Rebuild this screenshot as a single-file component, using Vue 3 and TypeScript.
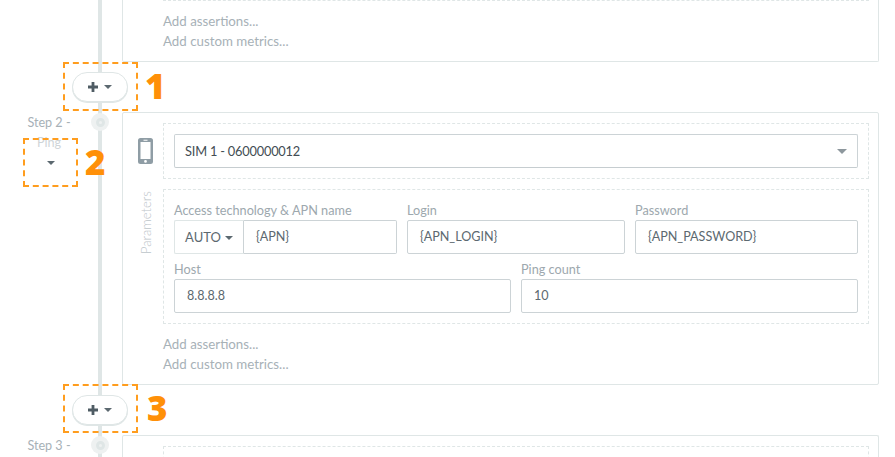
<script setup lang="ts">
interface Mark {
  id: number;
  kind: string;
}

const marks: Mark[] = [
  { id: 1, kind: "mark--one" },
  { id: 2, kind: "mark--two" },
  { id: 3, kind: "mark--three" },
];

const addLinks = ["Add assertions...", "Add custom metrics..."];
</script>

<template>
  <div class="scenario">
    <div class="rail"></div>

    <div class="step step--first">
      <div class="step__side"></div>
      <div class="card card--cut">
        <div class="dashed dashed--stub"></div>
        <div class="links">
          <a v-for="link in addLinks" :key="link">{{ link }}</a>
        </div>
      </div>
    </div>

    <div class="add-row">
      <button class="add-btn">
        <svg width="10" height="10" viewBox="0 0 10 10">
          <path fill="#4f5c64" d="M3.6 0h2.8v3.6H10v2.8H6.4V10H3.6V6.4H0V3.6h3.6z" />
        </svg>
        <span class="caret"></span>
      </button>
    </div>

    <div class="step">
      <div class="step__side">
        <div class="step__label">
          <span>Step 2 -</span>
          <span class="step__name">Ping</span>
          <span class="caret caret--label"></span>
        </div>
        <div class="step__dot"><span></span></div>
      </div>
      <div class="card">
        <div class="card__row">
          <div class="card__aside">
            <svg class="phone" width="15" height="26" viewBox="0 0 15 26">
              <path
                fill="#8f9da5"
                fill-rule="evenodd"
                d="M2.5 0h10A2.5 2.5 0 0 1 15 2.5v21a2.5 2.5 0 0 1-2.5 2.5h-10A2.5 2.5 0 0 1 0 23.5v-21A2.5 2.5 0 0 1 2.5 0zM2.5 4v17h10V4zM5.5 1.8v.9h4v-.9zM7.5 22a1.4 1.4 0 1 0 0 2.8 1.4 1.4 0 0 0 0-2.8z"
              />
            </svg>
          </div>
          <div class="dashed dashed--sim">
            <div class="select">
              <span>SIM 1 - 0600000012</span>
              <span class="select__arrow"></span>
            </div>
          </div>
        </div>

        <div class="card__row card__row--params">
          <div class="card__aside card__aside--text">
            <span class="vertical">Parameters</span>
          </div>
          <div class="dashed dashed--params">
            <div class="fields fields--three">
              <div class="field">
                <label>Access technology &amp; APN name</label>
                <div class="group">
                  <button class="group__btn">
                    AUTO
                    <span class="caret caret--dark"></span>
                  </button>
                  <div class="input input--joined">{APN}</div>
                </div>
              </div>
              <div class="field">
                <label>Login</label>
                <div class="input">{APN_LOGIN}</div>
              </div>
              <div class="field">
                <label>Password</label>
                <div class="input">{APN_PASSWORD}</div>
              </div>
            </div>
            <div class="fields fields--two">
              <div class="field">
                <label>Host</label>
                <div class="input">8.8.8.8</div>
              </div>
              <div class="field">
                <label>Ping count</label>
                <div class="input">10</div>
              </div>
            </div>
          </div>
        </div>

        <div class="links links--main">
          <a v-for="link in addLinks" :key="link">{{ link }}</a>
        </div>
      </div>
    </div>

    <div class="add-row">
      <button class="add-btn">
        <svg width="10" height="10" viewBox="0 0 10 10">
          <path fill="#4f5c64" d="M3.6 0h2.8v3.6H10v2.8H6.4V10H3.6V6.4H0V3.6h3.6z" />
        </svg>
        <span class="caret"></span>
      </button>
    </div>

    <div class="step">
      <div class="step__side">
        <div class="step__label"><span>Step 3 -</span></div>
        <div class="step__dot"><span></span></div>
      </div>
      <div class="card card--open">
        <div class="dashed dashed--next"></div>
      </div>
    </div>

    <template v-for="mark in marks" :key="mark.id">
      <div class="mark-box" :class="mark.kind"></div>
      <div class="mark-num" :class="mark.kind">{{ mark.id }}</div>
    </template>
  </div>
</template>

<style>
html,
body {
  margin: 0;
  background: #fff;
  overflow: hidden;
}
</style>

<style scoped>
.scenario {
  position: relative;
  width: 895px;
  height: 457px;
  overflow: hidden;
  background: #fff;
  font-family: "Lato", "Open Sans", sans-serif;
  font-size: 14px;
  color: #5c6970;
}

.rail {
  position: absolute;
  left: 98px;
  top: 0;
  bottom: 0;
  width: 4px;
  background: #dfe6e6;
}

.step {
  display: flex;
  position: relative;
}

.step__side {
  position: relative;
  width: 122px;
  flex: none;
}

.step__label {
  display: flex;
  flex-direction: column;
  align-items: center;
  width: 54px;
  margin: 1px 0 0 22px;
  line-height: 20px;
  font-size: 12.6px;
  color: #a7b1b7;
  white-space: nowrap;
}

.step__name {
  color: #cfd5d8;
}

.step__dot {
  position: absolute;
  left: 91px;
  top: 1px;
  width: 18px;
  height: 18px;
  border-radius: 50%;
  background: #eef1f1;
  display: flex;
  align-items: center;
  justify-content: center;
}

.step__dot span {
  width: 9px;
  height: 9px;
  box-sizing: border-box;
  border: 3px solid #dfe6e6;
  border-radius: 50%;
  background: #eef1f1;
}

.card {
  width: 757px;
  box-sizing: border-box;
  border: 1px solid #dfe6e6;
  border-radius: 2px;
  background: #fff;
  height: 273px;
  padding-top: 10px;
}

.card--cut {
  height: 62px;
  border-top: 0;
  padding-top: 0;
  border-radius: 0 0 2px 2px;
}

.card--open {
  height: 30px;
  border-bottom: 0;
}

.card__row {
  display: flex;
}

.card__row--params {
  margin-top: 10px;
}

.card__aside {
  width: 40px;
  flex: none;
  display: flex;
  justify-content: center;
  padding-top: 15px;
  padding-left: 5px;
  box-sizing: border-box;
}

.card__aside--text {
  padding-top: 0;
  align-items: flex-start;
}

.phone {
  display: block;
}

.vertical {
  writing-mode: vertical-rl;
  transform: rotate(180deg);
  font-size: 13px;
  font-weight: 300;
  line-height: 16px;
  color: #bcc4c9;
  height: 66px;
  margin-top: -1px;
}

.dashed {
  border: 1px dashed #dfe6e6;
  box-sizing: border-box;
  width: 706px;
  padding: 10px;
}

.dashed--stub {
  margin-left: 40px;
  height: 1px;
  padding: 0;
  border-top: 0;
  border-left: 0;
  border-right: 0;
}

.dashed--sim {
  height: 56px;
}

.dashed--params {
  height: 135px;
  padding-top: 10px;
}

.dashed--next {
  margin: 0 0 0 40px;
  height: 30px;
  border-bottom: 0;
}

.select {
  height: 34px;
  box-sizing: border-box;
  border: 1px solid #ccd3d6;
  border-bottom-color: #c6cdd0;
  border-radius: 2px;
  display: flex;
  align-items: center;
  justify-content: space-between;
  padding: 0 10px 0 10px;
  color: #434d53;
  font-size: 12.8px;
  letter-spacing: -0.2px;
}

.select__arrow {
  width: 0;
  height: 0;
  border-left: 5px solid transparent;
  border-right: 5px solid transparent;
  border-top: 5px solid #8d979d;
}

.fields {
  display: grid;
  column-gap: 10px;
}

.fields--three {
  grid-template-columns: 223px 218px 223px;
}

.fields--two {
  grid-template-columns: 337px 337px;
  margin-top: 5px;
}

.field label {
  display: block;
  height: 20px;
  line-height: 20px;
  font-size: 12.7px;
  color: #9da8ae;
}

.group {
  display: flex;
}

.group__btn {
  width: 70px;
  height: 34px;
  flex: none;
  box-sizing: border-box;
  border: 1px solid #dfe6e6;
  border-right: 1px solid #ccd3d6;
  border-radius: 2px 0 0 2px;
  background: #fff;
  padding: 0;
  font: inherit;
  font-size: 13px;
  color: #5c6970;
  display: flex;
  align-items: center;
  justify-content: center;
  gap: 4px;
}

.input {
  height: 34px;
  box-sizing: border-box;
  border: 1px solid #ccd3d6;
  border-radius: 2px;
  padding: 0 12px;
  line-height: 32px;
  font-size: 12.6px;
  color: #5c6970;
}

.input--joined {
  flex: 1;
  border-left: 0;
  border-radius: 0 2px 2px 0;
}

.links {
  display: flex;
  flex-direction: column;
  margin-left: 40px;
  padding-top: 10px;
  line-height: 20px;
  font-size: 13.3px;
  color: #a7b1b7;
}

.add-row {
  height: 50px;
  padding-top: 10px;
  box-sizing: border-box;
  position: relative;
}

.add-btn {
  display: flex;
  align-items: center;
  justify-content: center;
  gap: 6px;
  position: relative;
  width: 56px;
  height: 30px;
  margin-left: 72px;
  padding: 0;
  box-sizing: border-box;
  border: 1px solid #dfe6e6;
  border-radius: 15px;
  background: #fff;
  box-shadow: 0 1px 0 #dfe6e6;
  font-family: inherit;
}

.caret {
  display: inline-block;
  width: 0;
  height: 0;
  border-left: 4px solid transparent;
  border-right: 4px solid transparent;
  border-top: 4px solid #5c6970;
}

.caret--label {
  margin: 8px 0 0 3px;
}

.caret--dark {
  margin-top: 1px;
}

.mark-box {
  position: absolute;
  box-sizing: border-box;
  border: 2px dashed #ff9d1e;
}

.mark-box.mark--one {
  left: 63px;
  top: 62px;
  width: 75px;
  height: 49px;
}

.mark-box.mark--two {
  left: 23px;
  top: 138px;
  width: 55px;
  height: 49px;
}

.mark-box.mark--three {
  left: 63px;
  top: 384px;
  width: 75px;
  height: 49px;
}

.mark-num {
  position: absolute;
  font-family: "Open Sans", sans-serif;
  font-weight: 800;
  font-size: 35px;
  line-height: 36px;
  color: #ff9008;
}

.mark-num.mark--one {
  left: 145px;
  top: 68px;
}

.mark-num.mark--two {
  left: 85px;
  top: 144px;
}

.mark-num.mark--three {
  left: 147px;
  top: 390px;
}
</style>
